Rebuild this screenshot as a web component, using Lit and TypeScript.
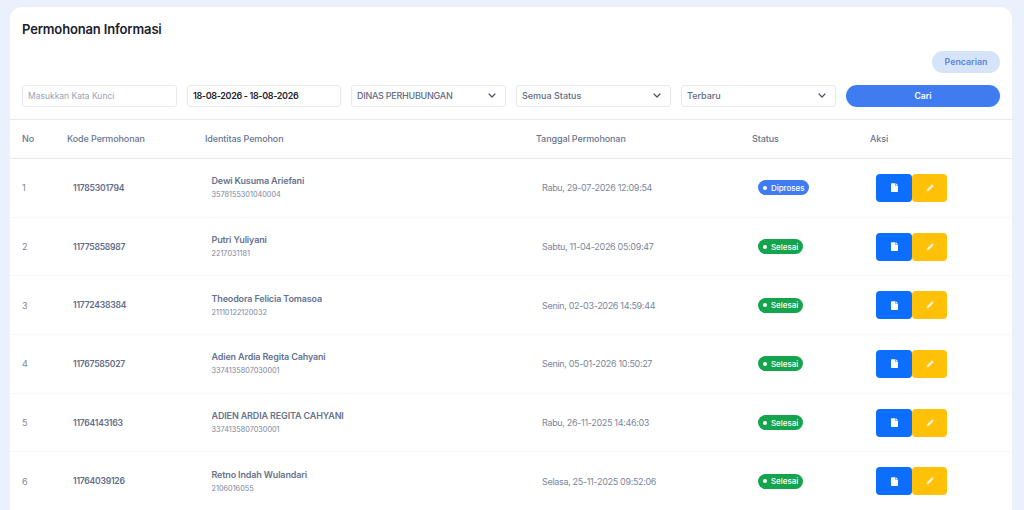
import { LitElement, html, css } from "lit";
import { customElement } from "lit/decorators.js";

const rows = [
  ["1", "11785301794", "Dewi Kusuma Ariefani", "3578155301040004", "Rabu, 29-07-2026 12:09:54", "Diproses"],
  ["2", "11775858987", "Putri Yuliyani", "2217031181", "Sabtu, 11-04-2026 05:09:47", "Selesai"],
  ["3", "11772438384", "Theodora Felicia Tomasoa", "21110122120032", "Senin, 02-03-2026 14:59:44", "Selesai"],
  ["4", "11767585027", "Adien Ardia Regita Cahyani", "3374135807030001", "Senin, 05-01-2026 10:50:27", "Selesai"],
  ["5", "11764143163", "ADIEN ARDIA REGITA CAHYANI", "3374135807030001", "Rabu, 26-11-2025 14:46:03", "Selesai"],
  ["6", "11764039126", "Retno Indah Wulandari", "2106016055", "Selasa, 25-11-2025 09:52:06", "Selesai"],
];

const chev = html`<svg class="chev" viewBox="0 0 8 5" width="8" height="5"><path d="M1 1l3 3 3-3" fill="none" stroke="#4b5563" stroke-width="1.2" stroke-linecap="round" stroke-linejoin="round"/></svg>`;

@customElement("app-root")
export class AppRoot extends LitElement {
  static styles = css`
    :host { display: block; height: 510px; overflow: hidden; background: #ebf1fc; font-family: "Inter", "Lato", sans-serif; padding: 7px 12px 0 10px; box-sizing: border-box; color: #67748e; }
    .card { background: #fff; border-radius: 12px 12px 0 0; }
    .top { padding: 14px 12px 12px; }
    h1 { margin: 0; font-size: 13px; line-height: 16px; font-weight: 600; color: #1a2030; letter-spacing: -0.15px; }
    .search-row { display: flex; justify-content: flex-end; margin-top: 14px; }
    .pill { width: 68px; height: 22px; border-radius: 11px; background: #d6e4fa; color: #5b86dd; font-size: 8.8px; font-weight: 600; display: flex; align-items: center; justify-content: center; padding-bottom: 1px; box-sizing: border-box; }
    .filters { display: grid; grid-template-columns: 155px 154px 155px 155px 155px 154px; gap: 10px; margin-top: 12px; }
    .field { height: 22px; box-sizing: border-box; border: 1px solid #e6e9f0; border-radius: 3px; display: flex; align-items: center; justify-content: space-between; padding: 0 9px 1px 5px; font-size: 9px; color: #5f6b84; font-weight: 500; white-space: nowrap; }
    .dinas { letter-spacing: -0.25px; }
    .ph { color: #9aa3b5; font-weight: 400; font-size: 8.5px; }
    .date { color: #1f2533; font-weight: 600; letter-spacing: -0.35px; }
    .cari { height: 22px; border-radius: 11px; background: #3f7cf2; color: #fff; font-size: 8.6px; font-weight: 600; display: flex; align-items: center; justify-content: center; padding-bottom: 1px; box-sizing: border-box; }
    .grid { display: grid; grid-template-columns: 45px 138px 331px 216px 118px 1fr; padding-left: 12px; align-items: center; }
    .head { height: 38px; border-top: 1px solid #e6e9ef; border-bottom: 1px solid #e6e9ef; font-size: 9px; font-weight: 500; color: #67748e; letter-spacing: -0.1px; padding-bottom: 1px; box-sizing: content-box; height: 37px; }
    .row { height: 58.7px; border-bottom: 1px solid #f6f7f9; font-size: 9px; box-sizing: border-box; }
    .in { padding-left: 6px; }
    .no { color: #7c869b; }
    .kode { font-weight: 600; color: #626e88; font-size: 8.6px; letter-spacing: -0.25px; }
    .name { font-weight: 600; color: #67738d; line-height: 13px; letter-spacing: -0.15px; padding-left: 0.5px; }
    .nik { font-size: 7.3px; color: #7c869b; line-height: 13px; margin-top: 1px; padding-left: 0.5px; }
    .date2 { color: #7c869b; letter-spacing: -0.32px; }
    .badge { display: inline-flex; align-items: center; gap: 4px; height: 15px; padding: 0 5px 0 5px; border-radius: 8px; color: #fff; font-size: 8px; font-weight: 500; letter-spacing: -0.05px; }
    .badge i { width: 4px; height: 4px; border-radius: 50%; background: #fff; }
    .blue { background: #3f7cf2; }
    .green { background: #14a44d; }
    .acts { display: flex; }
    .btn { width: 36px; height: 28px; border-radius: 4px; display: flex; align-items: center; justify-content: center; }
    .b1 { background: #0d6efd; }
    .b2 { background: #ffc107; width: 35px; }
  `;

  render() {
    return html`<div class="card">
      <div class="top">
        <h1>Permohonan Informasi</h1>
        <div class="search-row"><div class="pill">Pencarian</div></div>
        <div class="filters">
          <div class="field ph">Masukkan Kata Kunci</div>
          <div class="field date">18-08-2026 - 18-08-2026</div>
          <div class="field dinas">DINAS PERHUBUNGAN ${chev}</div>
          <div class="field">Semua Status ${chev}</div>
          <div class="field">Terbaru ${chev}</div>
          <div class="cari">Cari</div>
        </div>
      </div>
      <div class="grid head">
        <div>No</div><div>Kode Permohonan</div><div>Identitas Pemohon</div><div>Tanggal Permohonan</div><div>Status</div><div>Aksi</div>
      </div>
      ${rows.map((r) => html`<div class="grid row">
        <div class="no">${r[0]}</div>
        <div class="in kode">${r[1]}</div>
        <div class="in"><div class="name">${r[2]}</div><div class="nik">${r[3]}</div></div>
        <div class="in date2">${r[4]}</div>
        <div class="in"><span class="badge ${r[5] === "Diproses" ? "blue" : "green"}"><i></i>${r[5]}</span></div>
        <div class="in acts">
          <div class="btn b1"><svg viewBox="0 0 8 10" width="7" height="9"><path d="M.6 0H5v2.6c0 .3.2.5.5.5H8v6.2a.7.7 0 0 1-.7.7H.7a.7.7 0 0 1-.7-.7V.6A.6.6 0 0 1 .6 0zM5.6 0 8 2.5H5.6z" fill="#fff"/></svg></div>
          <div class="btn b2"><svg viewBox="0 0 10 10" width="8" height="8"><path d="M7 .9a1 1 0 0 1 1.4 0l.7.7a1 1 0 0 1 0 1.4L3.4 8.7.6 9.4l.7-2.8z" fill="#fff" opacity=".8"/></svg></div>
        </div>
      </div>`)}
    </div>`;
  }
}
